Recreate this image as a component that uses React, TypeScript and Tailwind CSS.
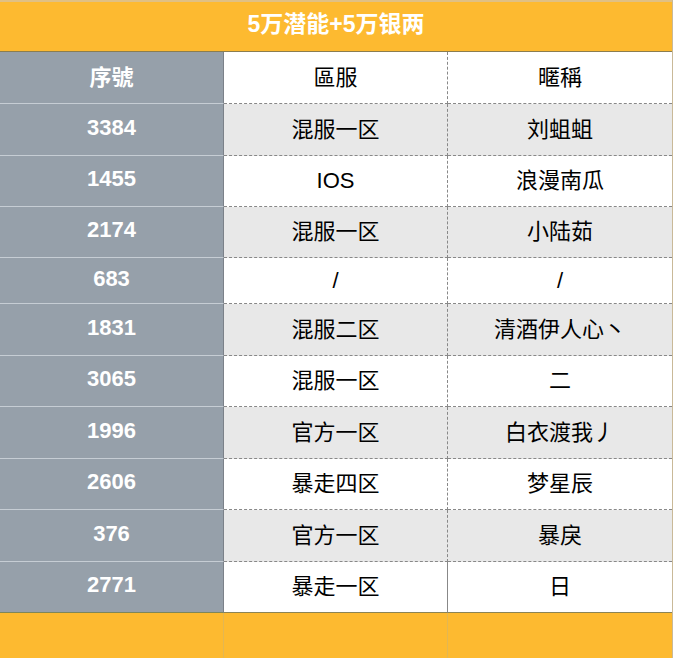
import React from "react";

type Row = { id: string; server: string; name: string; h: string; shade: boolean };

const rows: Row[] = [
  { id: "3384", server: "混服一区", name: "刘蛆蛆", h: "h-[52px]", shade: true },
  { id: "1455", server: "IOS", name: "浪漫南瓜", h: "h-[51px]", shade: false },
  { id: "2174", server: "混服一区", name: "小陆茹", h: "h-[51px]", shade: true },
  { id: "683", server: "/", name: "/", h: "h-[46px]", shade: false },
  { id: "1831", server: "混服二区", name: "清酒伊人心丶", h: "h-[52px]", shade: true },
  { id: "3065", server: "混服一区", name: "二", h: "h-[51px]", shade: false },
  { id: "1996", server: "官方一区", name: "白衣渡我丿", h: "h-[52px]", shade: true },
  { id: "2606", server: "暴走四区", name: "梦星辰", h: "h-[51px]", shade: false },
  { id: "376", server: "官方一区", name: "暴戾", h: "h-[52px]", shade: true },
  { id: "2771", server: "暴走一区", name: "日", h: "h-[51px]", shade: false },
];

const font = "font-['Liberation_Sans','Noto_Sans_CJK_SC',sans-serif]";

export default function App() {
  return (
    <div className={`w-[673px] h-[658px] flex flex-col overflow-hidden bg-white border-r border-[#c9b998] ${font}`}>
      {/* Title */}
      <div className="h-[52px] shrink-0 flex items-center justify-center bg-[#fdba30] border-t-2 border-[#e0c083] border-b border-b-[#8b7d4f]">
        <span className="text-white font-bold text-[23px] leading-none -mt-[4px]">5万潜能+5万银两</span>
      </div>

      {/* Header */}
      <div className="h-[52px] shrink-0 flex">
        <div className="w-[224px] shrink-0 flex items-center justify-center bg-[#96a0aa] border-r border-[#7b8189] border-b border-b-[#c6cdd4]">
          <span className="text-white font-bold text-[22px]">序號</span>
        </div>
        <div className="w-[224px] shrink-0 flex items-center justify-center bg-white border-r border-dashed border-r-[#888] border-b border-b-[#888]">
          <span className="text-black text-[22px]">區服</span>
        </div>
        <div className="flex-1 flex items-center justify-center bg-white border-b border-dashed border-b-[#888]">
          <span className="text-black text-[22px]">暱稱</span>
        </div>
      </div>

      {rows.map((r, i) => {
        const last = i === rows.length - 1;
        const bg = r.shade ? "bg-[#e8e8e8]" : "bg-white";
        return (
          <div key={r.id} className={`${r.h} shrink-0 flex`}>
            <div
              className={`w-[224px] shrink-0 flex items-center justify-center bg-[#96a0aa] border-r border-[#7b8189] border-b ${
                last ? "border-b-[#7f8758]" : "border-b-[#c6cdd4]"
              }`}
            >
              <span className="text-white font-bold text-[22px] leading-none -mt-[4px]">{r.id}</span>
            </div>
            <div
              className={`w-[224px] shrink-0 flex items-center justify-center ${bg} border-r border-dashed border-r-[#888] border-b ${
                last ? "border-solid border-b-[#8b8455]" : "border-b-[#888]"
              }`}
            >
              <span className="text-black text-[22px] -mt-px">{r.server}</span>
            </div>
            <div
              className={`flex-1 flex items-center justify-center ${bg} border-b ${
                last ? "border-b-[#8b8455]" : "border-dashed border-b-[#888]"
              }`}
            >
              <span className="text-black text-[22px] -mt-px">{r.name}</span>
            </div>
          </div>
        );
      })}

      {/* Footer */}
      <div className="flex-1 flex bg-[#fdba30]">
        <div className="w-[224px] shrink-0 border-r border-[#e3b752]" />
        <div className="w-[224px] shrink-0 border-r border-[#e3b752]" />
        <div className="flex-1" />
      </div>
    </div>
  );
}
